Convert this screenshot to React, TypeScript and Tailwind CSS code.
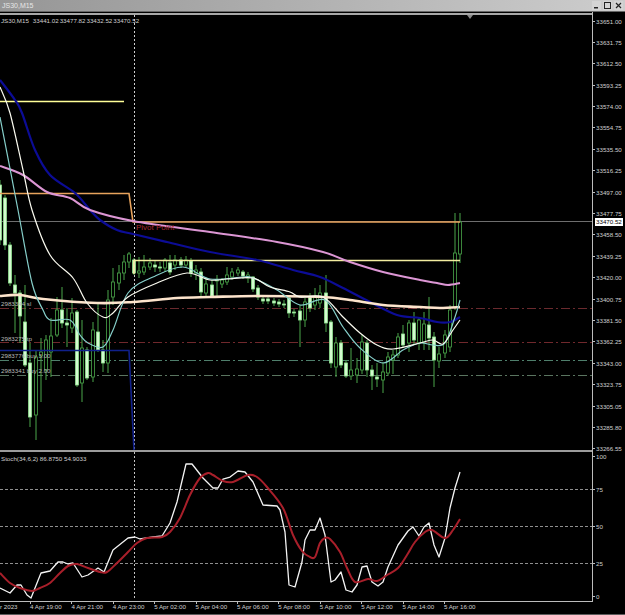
import React from 'react';

type Candle = [number, number, number, number, number, 0 | 1];

// x, body top, body bottom, wick top, wick bottom, filled
const candles: Candle[] = [
  [0, 185, 240, 180, 245, 1], [5, 198, 245, 195, 250, 1], [10, 245, 283, 242, 286, 1], [15, 285, 293, 275, 333, 1],
  [20, 293, 316, 290, 343, 1], [25, 322, 365, 285, 367, 1], [30, 363, 417, 343, 427, 1], [36, 357, 415, 350, 440, 0],
  [41, 352, 356, 338, 402, 0], [46, 340, 370, 335, 380, 0], [51, 336, 352, 318, 377, 0], [57, 310, 335, 297, 337, 0],
  [62, 310, 323, 287, 328, 1], [67, 323, 325, 308, 347, 1], [72, 313, 328, 298, 333, 0], [77, 312, 385, 310, 387, 1],
  [82, 348, 383, 320, 402, 0], [87, 350, 378, 347, 380, 1], [93, 330, 377, 322, 382, 0], [98, 332, 350, 303, 352, 1],
  [103, 350, 363, 340, 372, 1], [108, 300, 363, 290, 373, 0], [113, 282, 297, 268, 305, 0], [119, 273, 283, 265, 290, 0],
  [124, 262, 273, 255, 280, 0], [129, 254, 262, 252, 268, 0], [134, 260, 273, 258, 275, 1], [139, 271, 273, 257, 278, 0],
  [144, 267, 272, 255, 275, 0], [150, 263, 267, 258, 270, 0], [155, 265, 267, 260, 272, 1], [160, 267, 268, 262, 272, 1],
  [165, 260, 268, 258, 272, 0], [170, 263, 272, 255, 275, 1], [175, 260, 265, 255, 270, 0], [181, 260, 265, 257, 268, 1],
  [186, 260, 265, 256, 268, 0], [191, 261, 273, 258, 277, 1], [196, 270, 273, 265, 280, 0], [201, 272, 292, 268, 297, 1],
  [206, 284, 293, 277, 297, 0], [212, 285, 296, 280, 298, 1], [217, 280, 281, 275, 297, 0], [222, 280, 284, 278, 288, 0],
  [227, 275, 282, 267, 285, 0], [232, 272, 277, 268, 280, 0], [238, 270, 273, 267, 276, 0], [243, 272, 276, 270, 279, 1],
  [248, 275, 278, 272, 283, 0], [253, 277, 289, 276, 292, 1], [258, 288, 297, 285, 300, 1], [263, 299, 301, 296, 304, 1],
  [268, 299, 301, 296, 304, 1], [274, 301, 303, 298, 306, 1], [279, 302, 304, 299, 307, 1], [284, 304, 305, 300, 308, 1],
  [289, 298, 313, 295, 318, 1], [294, 312, 313, 309, 317, 1], [300, 311, 320, 305, 347, 1], [305, 302, 320, 298, 327, 0],
  [310, 297, 308, 293, 312, 1], [315, 297, 305, 288, 310, 0], [320, 293, 303, 285, 308, 0], [326, 293, 323, 275, 332, 1],
  [331, 322, 363, 320, 368, 1], [336, 343, 367, 337, 377, 0], [341, 343, 365, 340, 368, 1], [346, 363, 376, 360, 378, 1],
  [351, 370, 376, 348, 380, 0], [357, 369, 375, 358, 383, 0], [362, 342, 370, 335, 374, 0], [367, 343, 370, 340, 377, 1],
  [372, 370, 376, 365, 390, 1], [377, 377, 379, 363, 387, 1], [383, 372, 380, 362, 393, 0], [388, 357, 373, 352, 376, 0],
  [393, 355, 360, 350, 374, 0], [398, 337, 355, 333, 358, 0], [403, 334, 345, 325, 348, 1], [409, 323, 343, 320, 352, 0],
  [414, 323, 340, 312, 345, 1], [419, 320, 343, 318, 350, 0], [424, 324, 342, 312, 350, 0], [429, 325, 338, 297, 350, 1],
  [434, 337, 360, 332, 387, 1], [439, 354, 361, 347, 368, 0], [445, 335, 353, 330, 358, 0], [450, 310, 347, 305, 352, 0],
  [455, 253, 307, 213, 310, 0], [460, 222, 254, 213, 263, 0],
];

const blueLine = '0,80 15,100 22,113 35,150 50,175 75,193 90,210 100,220 117,230 133,234 167,242 210,252 257,260 293,270 320,277 343,288 370,302 397,315 420,318 437,322 450,322 460,317';
const pinkLine = '0,166 23,175 47,192 70,198 90,210 133,221 210,232 277,242 323,252 350,262 383,272 420,280 437,283 448,285 460,283';
const creamLine = '0,296 20,295 43,299 97,303 133,302 177,298 210,297 260,296 323,297 350,300 383,305 420,307 440,308 460,307';
const whiteLine = '0,87 10,113 23,170 32,210 50,255 73,278 87,303 103,317 113,313 128,297 157,283 187,273 210,280 227,279 253,278 270,287 290,292 300,297 323,297 343,317 360,333 377,345 393,349 420,343 433,340 443,344 453,330 460,320';
const tealLine = '0,117 18,210 32,283 43,310 50,320 70,320 80,335 88,343 103,347 113,330 128,293 153,277 183,267 210,279 243,277 253,278 277,290 300,305 325,300 343,327 360,348 383,363 403,350 420,343 433,345 445,343 455,317 460,300';

const stochMain = '0,588 10,593 17,585 21,585 27,595 31,598 41,573 50,571 58,562 63,562 68,564 73,563 82,577 88,575 98,568 104,572 113,550 128,538 135,537 140,539 153,537 162,536 170,523 177,502 186,464 192,464 203,478 213,488 218,488 223,479 230,477 238,471 245,472 253,482 263,505 277,506 280,510 285,532 289,585 295,587 302,562 305,540 310,530 315,530 320,518 325,535 331,582 335,580 341,572 346,590 352,592 357,585 362,567 367,566 372,582 378,586 383,582 388,567 398,545 408,531 413,527 419,536 424,527 429,523 434,545 439,557 445,538 450,508 455,488 460,472';
const stochSignal = '0,573 10,583 20,588 32,591 40,588 50,583 60,573 68,566 77,564 88,568 100,572 107,572 117,563 128,552 137,543 147,538 162,537 170,532 180,518 190,495 200,478 208,473 213,475 223,481 233,482 248,475 257,477 267,487 283,508 293,535 302,551 310,557 315,557 320,543 325,538 330,539 340,552 347,568 355,582 368,579 377,581 387,575 398,568 407,555 415,542 425,532 432,530 445,538 453,530 460,519';

const priceLabels = ['33651.00', '33631.75', '33612.50', '33593.25', '33574.00', '33554.75', '33535.50', '33516.25', '33497.00', '33477.75', '33458.50', '33439.25', '33420.00', '33400.75', '33381.50', '33362.25', '33343.00', '33323.75', '33305.05', '33285.80', '33266.55'];
const timeLabels = ['4 Apr 19:00', '4 Apr 21:00', '4 Apr 23:00', '5 Apr 02:00', '5 Apr 04:00', '5 Apr 06:00', '5 Apr 08:00', '5 Apr 10:00', '5 Apr 12:00', '5 Apr 14:00', '5 Apr 16:00'];

// Catmull-Rom through the points, the moving averages are curves in the chart
const smooth = (points: string): string => {
  const p = points.split(' ').map((s) => s.split(',').map(Number));
  let d = `M${p[0][0]} ${p[0][1]}`;
  for (let i = 0; i < p.length - 1; i++) {
    const a = p[Math.max(i - 1, 0)];
    const b = p[i];
    const c = p[i + 1];
    const e = p[Math.min(i + 2, p.length - 1)];
    const c1x = b[0] + (c[0] - a[0]) / 6;
    const c1y = b[1] + (c[1] - a[1]) / 6;
    const c2x = c[0] - (e[0] - b[0]) / 6;
    const c2y = c[1] - (e[1] - b[1]) / 6;
    d += ` C${c1x.toFixed(1)} ${c1y.toFixed(1)} ${c2x.toFixed(1)} ${c2y.toFixed(1)} ${c[0]} ${c[1]}`;
  }
  return d;
};

const AxisLabel = ({ text, className = '' }: { text: string; className?: string }) => (
  <div className={`flex h-[7px] items-center gap-[1px] ${className}`}>
    <span className="h-px w-[2px] bg-[#bdbdbd]" />
    <span className="leading-[7px]">{text}</span>
  </div>
);

const Candles = () => (
  <g>
    {candles.map(([x, top, bottom, wickTop, wickBottom, filled]) => (
      <g key={x}>
        <line x1={x} x2={x} y1={wickTop} y2={wickBottom} stroke="#4aa64a" strokeWidth="1" />
        <rect
          x={x - 1.5}
          y={top}
          width="3"
          height={bottom - top}
          fill={filled ? '#d4fbd0' : '#000'}
          stroke={filled ? '#8fe08f' : '#4aa64a'}
          strokeWidth="0.8"
        />
      </g>
    ))}
  </g>
);

const MainChart = () => (
  <svg className="block h-[435px] w-[592px]" viewBox="0 15 592 435">
    <polygon points="467,15 473,15 470,19" fill="#8a8a8a" />
    <line x1="0" x2="592" y1="221.5" y2="221.5" stroke="#6e6e6e" strokeWidth="1" />
    <line x1="0" x2="592" y1="308.5" y2="308.5" stroke="#6b2a2e" strokeDasharray="9 3 2 3" />
    <line x1="0" x2="592" y1="342.5" y2="342.5" stroke="#70282c" strokeDasharray="9 3 2 3" />
    <line x1="0" x2="592" y1="360.5" y2="360.5" stroke="#4f7f6c" strokeDasharray="9 3 2 3" />
    <line x1="0" x2="592" y1="375.5" y2="375.5" stroke="#5a7560" strokeDasharray="9 3 2 3" />
    <Candles />
    <line x1="134.5" x2="134.5" y1="15" y2="450" stroke="#d0d0d0" strokeDasharray="2 2" />
    <line x1="0" x2="124" y1="101.5" y2="101.5" stroke="#ffff98" strokeWidth="1.4" />
    <polyline points="0,193.5 129,193.5 133,222 460,222" fill="none" stroke="#e8a35c" strokeWidth="1.6" />
    <polyline points="134,274 134,260.5 460,260.5" fill="none" stroke="#f3eda0" strokeWidth="1.5" />
    <polyline points="0,350.5 129,350.5 134,450" fill="none" stroke="#10208c" strokeWidth="1.6" />
    <path d={smooth(blueLine)} fill="none" stroke="#0c0c96" strokeWidth="2.2" />
    <path d={smooth(pinkLine)} fill="none" stroke="#dc96d4" strokeWidth="2" />
    <path d={smooth(creamLine)} fill="none" stroke="#fde4cc" strokeWidth="2.6" />
    <path d={smooth(tealLine)} fill="none" stroke="#86cfca" strokeWidth="1.2" />
    <path d={smooth(whiteLine)} fill="none" stroke="#fbfbf0" strokeWidth="1.2" />
  </svg>
);

const StochChart = () => (
  <svg className="block h-[148px] w-[592px]" viewBox="0 452 592 148">
    <line x1="0" x2="592" y1="489.5" y2="489.5" stroke="#8f8f8f" strokeDasharray="3 2" />
    <line x1="0" x2="592" y1="526.5" y2="526.5" stroke="#8f8f8f" strokeDasharray="3 2" />
    <line x1="0" x2="592" y1="563.5" y2="563.5" stroke="#8f8f8f" strokeDasharray="3 2" />
    <line x1="134.5" x2="134.5" y1="452" y2="600" stroke="#c4c4c4" strokeDasharray="2 2" />
    <polyline points={stochMain} fill="none" stroke="#f4f4f4" strokeWidth="1.3" strokeLinejoin="round" />
    <path d={smooth(stochSignal)} fill="none" stroke="#a81f2a" strokeWidth="2" />
  </svg>
);

export default function App() {
  return (
    <div className="flex h-[615px] w-[625px] flex-col overflow-hidden bg-black font-['Liberation_Sans',sans-serif] text-[6.2px] text-[#cfcfcf]">
      {/* Window title */}
      <div className="flex h-[12px] shrink-0 items-center justify-between border-b border-[#666] bg-linear-to-r from-[#969696] to-[#cdcdcd] pl-[2px] pr-[2px]">
        <span className="text-[7px] leading-none text-[#e6e6e6]">JS30,M15</span>
        <div className="flex items-center gap-[2px]">
          <svg className="h-[9px] w-[9px]" viewBox="0 0 9 9">
            <rect width="9" height="9" fill="#d4d4d4" />
            <rect x="2" y="6" width="4" height="1.5" fill="#222" />
          </svg>
          <svg className="h-[9px] w-[9px]" viewBox="0 0 9 9">
            <rect width="9" height="9" fill="#d4d4d4" />
            <rect x="1.5" y="1.5" width="6" height="6" fill="none" stroke="#222" />
          </svg>
          <svg className="h-[9px] w-[9px]" viewBox="0 0 9 9">
            <rect width="9" height="9" fill="#d4d4d4" />
            <path d="M2 2 L7 7 M7 2 L2 7" stroke="#222" strokeWidth="1.2" />
          </svg>
        </div>
      </div>

      <div className="flex min-h-0 flex-1">
        {/* Chart column */}
        <div className="flex w-[593px] shrink-0 flex-col border-r border-[#bcbcbc] pt-px">
          <div className="h-[2px] bg-[#a8a8a8]" />
          <div className="relative">
            <MainChart />
            <div className="absolute left-[1px] top-[2px] flex gap-[1px] leading-[7px]">
              <span className="mr-[3px]">JS30,M15</span>
              <span>33441.02</span>
              <span>33477.82</span>
              <span>33432.52</span>
              <span>33470.52</span>
            </div>
            <span className="absolute left-[136px] top-[208px] text-[8px] leading-[9px] text-[#a42a32]">Pivot Point</span>
            <span className="absolute left-[1px] top-[285px] leading-[7px] text-[#b9b9b9]">2983344 sl</span>
            <span className="absolute left-[1px] top-[320px] leading-[7px] text-[#b9b9b9]">2983275 tp</span>
            <span className="absolute left-[1px] top-[337px] leading-[7px] text-[#b9b9b9]">2983776 buy 3.00</span>
            <span className="absolute left-[1px] top-[352px] leading-[7px] text-[#b9b9b9]">2983341 buy 2.00</span>
          </div>
          <div className="h-[2px] bg-[#9c9c9c]" />
          <div className="relative">
            <StochChart />
            <span className="absolute left-[1px] top-[3px] leading-[7px]">Stoch(34,6,2) 86.8750 54.9033</span>
          </div>
        </div>

        {/* Price axis */}
        <div className="relative flex flex-1 flex-col pt-[5.5px]">
          <div className="flex h-[435px] flex-col justify-between">
            {priceLabels.map((p) => (
              <AxisLabel key={p} text={p} />
            ))}
          </div>
          <AxisLabel text="100" />
          <AxisLabel text="75" className="mt-[26px]" />
          <AxisLabel text="50" className="mt-[30px]" />
          <AxisLabel text="25" className="mt-[30px]" />
          <AxisLabel text="0" className="mt-[26px]" />
          <span className="absolute left-[2px] top-[206px] h-[8px] w-[28px] bg-white pl-[1px] leading-[8px] text-black">33470.52</span>
        </div>
      </div>

      {/* Time axis */}
      <div className="h-px w-[593px] shrink-0 bg-[#bcbcbc]" />
      <div className="flex h-[12px] shrink-0">
        <div className="w-[30px] shrink-0 pt-[1px] leading-[7px] whitespace-nowrap">r 2023</div>
        {timeLabels.map((t) => (
          <div key={t} className="relative w-[41.4px] shrink-0 pt-[1px] leading-[7px] whitespace-nowrap">
            <span className="absolute left-0 top-0 h-[2px] w-px bg-[#bcbcbc]" />
            {t}
          </div>
        ))}
      </div>
      <div className="h-[1px] shrink-0 bg-[#5c5c5c]" />
    </div>
  );
}
